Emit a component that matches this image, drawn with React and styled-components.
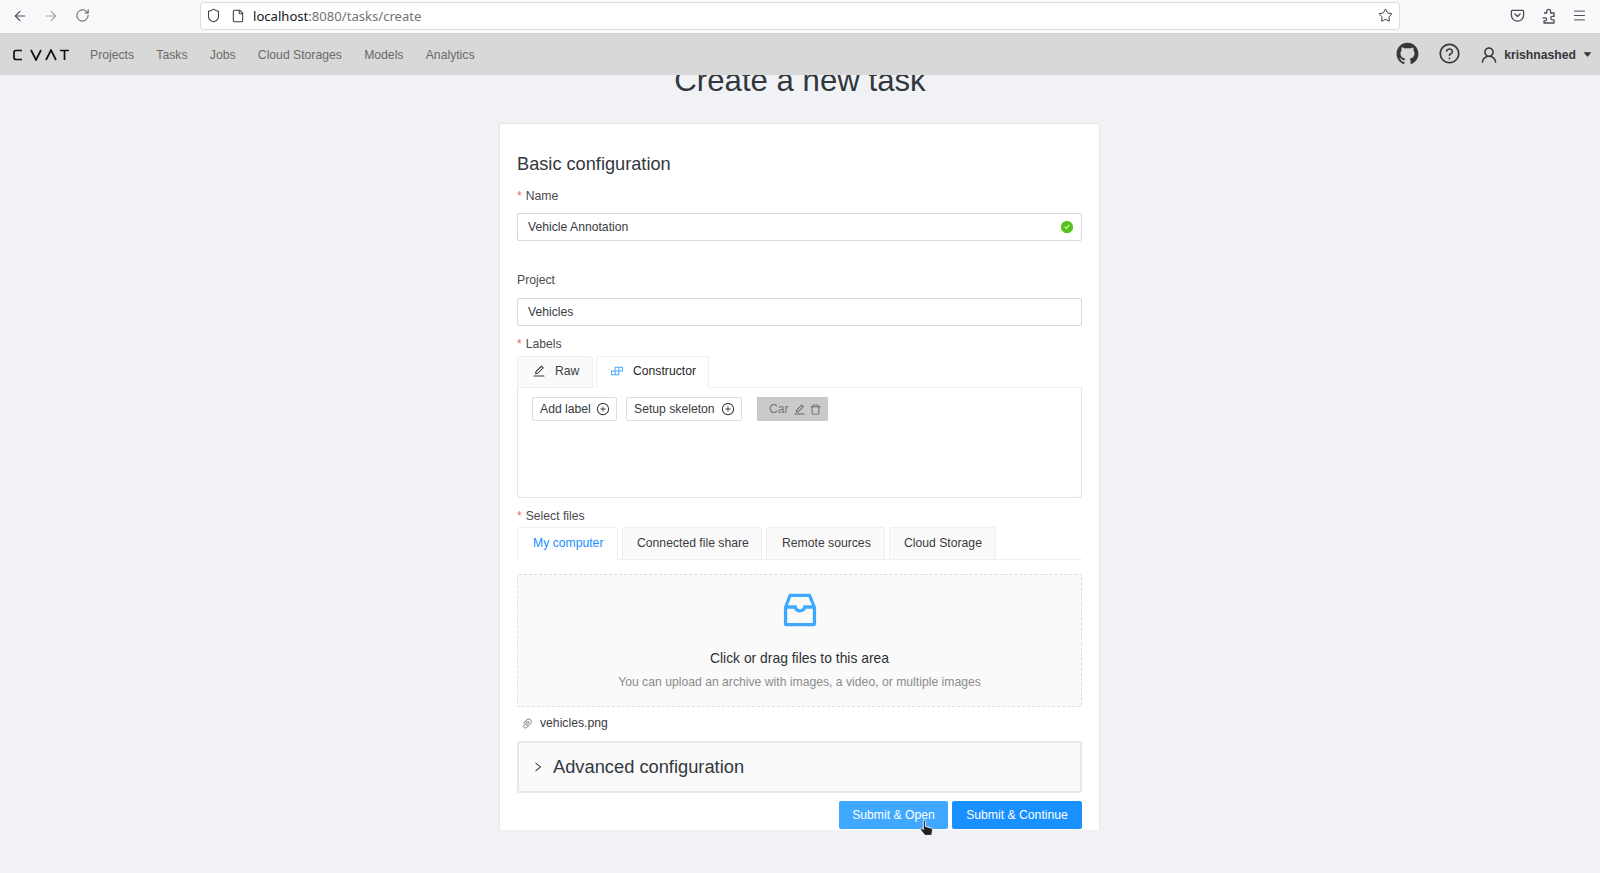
import React from "react";
import styled, { createGlobalStyle } from "styled-components";
import { ArrowLeft, ArrowRight, RotateCw, Shield, File, Star, Menu } from "lucide-react";
import {
  AiFillCaretDown,
  AiFillCheckCircle,
  AiFillGithub,
  AiOutlineBuild,
  AiOutlineDelete,
  AiOutlineEdit,
  AiOutlineInbox,
  AiOutlinePaperClip,
  AiOutlinePlusCircle,
  AiOutlineQuestionCircle,
  AiOutlineRight,
  AiOutlineUser,
} from "react-icons/ai";

const GlobalStyle = createGlobalStyle`
  html, body {
    margin: 0;
    padding: 0;
    background: #f0f2f5;
    font-family: "Liberation Sans", Arial, sans-serif;
    overflow: hidden;
  }
  * { box-sizing: border-box; }
`;

const Page = styled.div`
  position: relative;
  width: 1600px;
  height: 873px;
  overflow: hidden;
  background: #f0f2f5;
`;

const BrowserBar = styled.div`
  display: flex;
  align-items: center;
  height: 34px;
  background: #f9f9fb;
  border-bottom: 1px solid #cfcfd8;
  padding: 0 10px 2px 12px;
`;

const BrowserBtn = styled.div`
  display: flex;
  align-items: center;
  justify-content: center;
  width: 16px;
  margin-right: ${(p) => p.$gap || 0}px;
  color: ${(p) => p.$color || "#4d4d52"};
`;

const UrlBar = styled.div`
  display: flex;
  align-items: center;
  width: 1200px;
  height: 28px;
  margin: 0 109px 0 0;
  padding: 0 6px 0 5px;
  background: #fff;
  border: 1px solid #dcdce0;
  border-radius: 4px;
  color: #3a3a40;
`;

const PageIcon = styled(File)`
  margin-left: 10px;
`;

const UrlText = styled.div`
  flex: 1;
  margin-left: 8px;
  font-family: "Noto Sans", sans-serif;
  font-size: 13.1px;
  color: #737378;
  b { font-weight: 400; color: #15141a; }
`;

const TopNav = styled.header`
  position: relative;
  z-index: 2;
  display: flex;
  align-items: center;
  height: 41px;
  background: #d8d8d8;
  padding: 0 7px 0 13px;
`;

const Logo = styled.svg`
  display: block;
  width: 56px;
  height: 12px;
  margin-right: 21px;
`;

const NavLink = styled.a`
  font-size: 12.2px;
  color: #6a6a6a;
  margin-right: 22.3px;
`;

const NavRight = styled.div`
  display: flex;
  align-items: center;
  margin-left: auto;
  color: #33383d;
`;

const GithubIcon = styled(AiFillGithub)`
  font-size: 25px;
  margin: -2px 18px 0 0;
`;

const HelpIcon = styled(AiOutlineQuestionCircle)`
  font-size: 23px;
  margin: -2px 18px 0 0;
`;

const UserName = styled.span`
  font-size: 12.2px;
  font-weight: 700;
  margin: 0 6px 0 5px;
`;

const Main = styled.main`
  height: 755px;
  overflow: hidden;
`;

const Heading = styled.h1`
  margin: -13px 0 23px;
  height: 38px;
  line-height: 38px;
  font-size: 31.2px;
  font-weight: 400;
  text-align: center;
  color: #33383d;
`;

const Card = styled.section`
  width: 601px;
  margin: 0 0 0 499px;
  padding: 28px 17px 30px;
  background: #fff;
  border: 1px solid #e6e6e6;
  border-radius: 2px;
`;

const CardTitle = styled.h2`
  margin: 0 0 9px;
  height: 24px;
  line-height: 24px;
  font-size: 18.2px;
  font-weight: 400;
  color: #33383d;
`;

const Label = styled.div`
  height: 22px;
  line-height: 22px;
  margin: ${(p) => p.$top || 0}px 0 ${(p) => p.$bottom ?? 6}px;
  font-size: 12.2px;
  color: #4a4a4e;
  i {
    font-style: normal;
    color: #f5606a;
    margin-right: 4px;
    font-size: 12px;
  }
`;

const Input = styled.div`
  display: flex;
  align-items: center;
  justify-content: space-between;
  height: 28px;
  padding: 0 7px 0 10px;
  background: #fff;
  border: 1px solid #d9d9d9;
  border-radius: 2px;
  font-size: 12.2px;
  color: #3b3b40;
`;

const OkIcon = styled(AiFillCheckCircle)`
  font-size: 14px;
  color: #52c41a;
`;

const Tabs = styled.div`
  display: flex;
  gap: ${(p) => p.$gap}px;
  align-items: flex-end;
  border-bottom: ${(p) => (p.$line ? "1px solid #f0f0f0" : "0")};
`;

const Tab = styled.div`
  display: flex;
  align-items: center;
  height: ${(p) => p.$h}px;
  width: ${(p) => p.$w}px;
  padding: 0 0 ${(p) => p.$lift || 1}px ${(p) => p.$pad}px;
  margin-bottom: -1px;
  background: ${(p) => (p.$active ? "#fff" : "#fafafa")};
  border: 1px solid #f0f0f0;
  border-bottom-color: ${(p) => (p.$active ? "#fff" : "#f0f0f0")};
  border-radius: 2px 2px 0 0;
  font-size: 12.2px;
  color: ${(p) => p.$color || "#3b3b40"};
  svg { font-size: 14px; margin-right: 9px; }
`;

const BuildIcon = styled(AiOutlineBuild)`
  color: #40a9ff;
`;

const LabelsPanel = styled.div`
  display: flex;
  align-items: flex-start;
  height: 111px;
  padding: 9px 14px;
  border: 1px solid #e4e4e4;
  border-top-color: #f0f0f0;
  border-radius: 0 0 4px 4px;
`;

const GhostButton = styled.div`
  display: flex;
  align-items: center;
  justify-content: space-between;
  width: ${(p) => p.$w}px;
  height: 24px;
  margin-right: ${(p) => p.$gap}px;
  padding: 0 6px 0 7px;
  border: 1px solid #dedede;
  border-radius: 2px;
  font-size: 12.2px;
  color: #3b3b40;
  svg { font-size: 14px; }
`;

const LabelChip = styled.div`
  display: flex;
  align-items: center;
  width: 71px;
  height: 24px;
  padding-left: 12px;
  background: #cacaca;
  font-size: 12.2px;
  color: #77777a;
  svg { font-size: 13px; margin-left: 4px; color: #666; }
  svg + svg { margin-left: 3px; }
`;

const DropZone = styled.div`
  display: flex;
  flex-direction: column;
  align-items: center;
  height: 133px;
  margin-top: 14px;
  background: #fafafa;
  border: 1px dashed #dedede;
  border-radius: 2px;
`;

const InboxIcon = styled(AiOutlineInbox)`
  font-size: 44px;
  margin-top: 13px;
  color: #40a9ff;
`;

const DropTitle = styled.div`
  margin-top: 16px;
  font-size: 13.9px;
  line-height: 20px;
  color: #2f2f33;
`;

const DropHint = styled.div`
  margin-top: 5px;
  font-size: 12.2px;
  line-height: 18px;
  color: #8c8c8c;
`;

const FileRow = styled.div`
  display: flex;
  align-items: center;
  height: 24px;
  margin: 4px 0 6px;
  padding-left: 4px;
  font-size: 12.2px;
  color: #3b3b40;
  svg { font-size: 13px; color: #8c8c8c; margin-right: 6px; }
`;

const Collapse = styled.div`
  display: flex;
  align-items: center;
  height: 52px;
  padding-left: 13px;
  background: #fafafa;
  border: 2px solid #e8e8e8;
  border-radius: 2px;
  font-size: 18.3px;
  color: #33383d;
  svg { font-size: 12px; margin-right: 9px; }
`;

const Actions = styled.div`
  display: flex;
  justify-content: flex-end;
  gap: 4px;
  margin-top: 8px;
`;

const PrimaryButton = styled.div`
  display: flex;
  align-items: center;
  justify-content: center;
  width: ${(p) => p.$w}px;
  height: 28px;
  background: ${(p) => p.$bg};
  border-radius: 2px;
  font-size: 12.2px;
  color: #fff;
`;

const Cursor = styled.svg`
  position: absolute;
  left: 919px;
  top: 819px;
  width: 15px;
  height: 19px;
  z-index: 3;
`;

const App = () => {
  return (
    <Page>
      <GlobalStyle />
      <BrowserBar>
        <BrowserBtn $gap={15}><ArrowLeft size={16} strokeWidth={1.6} /></BrowserBtn>
        <BrowserBtn $gap={15} $color="#a5a5aa"><ArrowRight size={16} strokeWidth={1.6} /></BrowserBtn>
        <BrowserBtn $gap={110}><RotateCw size={15} strokeWidth={1.6} /></BrowserBtn>
        <UrlBar>
          <Shield size={15} strokeWidth={1.7} />
          <PageIcon size={14} strokeWidth={1.8} />
          <UrlText><b>localhost</b>:8080/tasks/create</UrlText>
          <Star size={15} strokeWidth={1.6} />
        </UrlBar>
        <BrowserBtn $gap={15}>
          <svg width="15" height="15" viewBox="0 0 16 16" fill="none" stroke="currentColor" strokeWidth="1.4" strokeLinecap="round" strokeLinejoin="round">
            <path d="M2.500 2.500h11a1 1 0 0 1 1 1v4.200a6.500 6.300 0 0 1-13 0V3.500a1 1 0 0 1 1-1z" />
            <path d="M5.200 6.300 8 9l2.800-2.700" />
          </svg>
        </BrowserBtn>
        <BrowserBtn $gap={15}>
          <svg width="15" height="16" viewBox="0 0 15 16" fill="none" stroke="currentColor" strokeWidth="1.3" strokeLinejoin="round">
            <path d="M3 5h2.800V3.200a1.900 1.900 0 0 1 3.800 0V5h3.400v3.400h-1.600a1.700 1.700 0 0 0 0 3.400H13V15H3v-2.200h1.200a1.500 1.500 0 0 0 0-3H1.500" />
          </svg>
        </BrowserBtn>
        <BrowserBtn><Menu size={15} strokeWidth={1.6} /></BrowserBtn>
      </BrowserBar>

      <TopNav>
        <Logo viewBox="0 0 56 12" fill="none" stroke="#111" strokeWidth="1.7">
          <path d="M9 1.500H3.200Q1 1.500 1 3.500v5Q1 10.500 3.200 10.500H9" />
          <path d="M18 1l5 10 5-10" />
          <path d="M33 11l5-10 5 10" />
          <path d="M47 1.500h9M51.500 1.500V11" />
        </Logo>
        <NavLink>Projects</NavLink>
        <NavLink>Tasks</NavLink>
        <NavLink>Jobs</NavLink>
        <NavLink>Cloud Storages</NavLink>
        <NavLink>Models</NavLink>
        <NavLink>Analytics</NavLink>
        <NavRight>
          <GithubIcon />
          <HelpIcon />
          <AiOutlineUser size={20} />
          <UserName>krishnashed</UserName>
          <AiFillCaretDown size={11} />
        </NavRight>
      </TopNav>

      <Main>
        <Heading>Create a new task</Heading>
        <Card>
          <CardTitle>Basic configuration</CardTitle>
          <Label><i>*</i>Name</Label>
          <Input>Vehicle Annotation<OkIcon /></Input>
          <Label $top={28} $bottom={7}>Project</Label>
          <Input>Vehicles</Input>
          <Label $top={7} $bottom={1}><i>*</i>Labels</Label>
          <Tabs $gap={3}>
            <Tab $w={76} $h={32} $pad={14} $lift={2}><AiOutlineEdit />Raw</Tab>
            <Tab $w={113} $h={32} $pad={13} $lift={2} $active $color="#1f1f23"><BuildIcon />Constructor</Tab>
          </Tabs>
          <LabelsPanel>
            <GhostButton $w={85} $gap={9}>Add label<AiOutlinePlusCircle /></GhostButton>
            <GhostButton $w={116} $gap={15}>Setup skeleton<AiOutlinePlusCircle /></GhostButton>
            <LabelChip>Car<AiOutlineEdit /><AiOutlineDelete /></LabelChip>
          </LabelsPanel>
          <Label $top={7} $bottom={0}><i>*</i>Select files</Label>
          <Tabs $gap={4} $line>
            <Tab $w={101} $h={33} $pad={15} $active $color="#1890ff">My computer</Tab>
            <Tab $w={140} $h={33} $pad={14}>Connected file share</Tab>
            <Tab $w={119} $h={33} $pad={15}>Remote sources</Tab>
            <Tab $w={107} $h={33} $pad={14}>Cloud Storage</Tab>
          </Tabs>
          <DropZone>
            <InboxIcon />
            <DropTitle>Click or drag files to this area</DropTitle>
            <DropHint>You can upload an archive with images, a video, or multiple images</DropHint>
          </DropZone>
          <FileRow><AiOutlinePaperClip />vehicles.png</FileRow>
          <Collapse><AiOutlineRight />Advanced configuration</Collapse>
          <Actions>
            <PrimaryButton $w={109} $bg="#40a9ff">Submit &amp; Open</PrimaryButton>
            <PrimaryButton $w={130} $bg="#1890ff">Submit &amp; Continue</PrimaryButton>
          </Actions>
        </Card>
      </Main>

      <Cursor viewBox="0 0 14 18">
        <path d="M4 1.500c.8-.8 2-.3 2 .8V7l5 1.500c1.200.4 1.800 1.300 1.600 2.500l-.6 4.500H5.500L1.500 10.500c-.6-1 .6-2 1.600-1.200L4 10z" fill="#222" stroke="#fff" strokeWidth=".8" />
      </Cursor>
    </Page>
  );
};

export default App;
